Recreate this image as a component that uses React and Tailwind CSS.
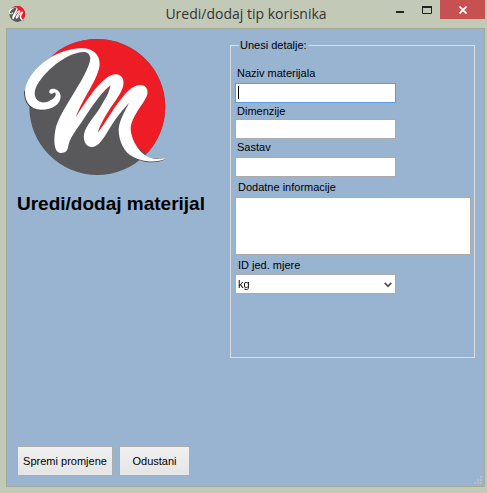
import React from "react";

function Logo({ className }) {
  return (
    <svg viewBox="40 24 432 414" className={className} aria-hidden="true">
      <circle cx="263" cy="231" r="204" fill="#59595b" />
      <path
        fill="#ee1c25"
        d="M118 88C155 45 210 27 263 27A204 204 0 0 1 411 371L380 350L350 295L395 185L264 308L325 150L198 263L258 90L220 58Z"
      />
      <path
        fill="#414143"
        d="M43 180C42 220 60 243 98 242L90 225L60 215ZM370 380C395 399 440 402 468 387L430 385Z"
      />
      <path
        fill="#fff"
        d="M119 183C122 172 150 174 153 198C153 225 125 240 92 239C63 238 45 215 46 185C49 128 130 56 215 55C248 54 270 72 270 102C268 145 218 205 198 263C230 212 280 133 318 133C336 133 344 148 341 165C336 198 285 245 264 308C292 278 345 165 390 165C408 163 416 178 413 192C409 215 366 255 363 295C363 330 395 385 435 386C448 387 460 384 468 386C440 400 395 395 370 380C342 368 327 330 327 300C327 272 348 240 358 218C325 255 312 275 295 303C282 324 267 350 248 351C230 352 220 335 223 313C230 282 254 263 272 232C286 207 300 188 302 166C268 195 240 240 220 270C205 293 184 318 177 343C174 358 173 369 153 369C132 367 132 330 137 300C143 270 165 235 194 187C212 158 241 110 242 85C240 65 225 63 205 68C150 80 76 150 75 190C76 218 103 224 122 211C136 204 141 195 137 188C133 186 130 193 123 191C119 189 118 186 119 183Z"
      />
    </svg>
  );
}

const field = "block border border-[#ababab] bg-white px-[2px] text-black outline-none";
const button =
  "h-[30px] border border-[#acacac] bg-linear-to-b from-[#f0f0f0] to-[#e5e5e5] text-center";

export default function App() {
  return (
    <div className="flex min-h-screen flex-col bg-[#c2cab7] pr-[2px] pb-[6px] pl-[6px] font-['Liberation_Sans',sans-serif] text-[11px] leading-4 text-black">
      <header className="flex h-7 items-center">
        <Logo className="ml-[2px] h-4 w-[18px]" />
        <h1 className="flex-1 pl-20 text-center font-['Open_Sans',sans-serif] text-[14px] leading-5 text-[#333]">
          Uredi/dodaj tip korisnika
        </h1>
        <div className="flex h-7 items-start">
          <button type="button" aria-label="Minimiziraj" className="flex h-[19px] w-[27px] items-center justify-center">
            <svg width="8" height="10"><path d="M0 6h8v2H0z" fill="#222" /></svg>
          </button>
          <button type="button" aria-label="Maksimiziraj" className="flex h-[19px] w-[27px] items-center justify-center">
            <svg width="10" height="8"><path d="M.5 1h9v6.500h-9z" fill="none" stroke="#222" /><path d="M0 0h10v2H0z" fill="#222" /></svg>
          </button>
          <button type="button" aria-label="Zatvori" className="flex h-[19px] w-[45px] items-center justify-center bg-[#c75050]">
            <svg width="8" height="8"><path d="M.5.5l7 7M7.500.5l-7 7" stroke="#fff" strokeWidth="1.800" /></svg>
          </button>
        </div>
      </header>

      <form className="flex flex-1 flex-col border border-[#a3aa99] bg-[#99b4d1]">
        <div className="flex items-start pt-2 pr-[9px]">
          <div className="w-[223px] shrink-0">
            <Logo className="mt-px ml-4 h-[138px] w-[144px]" />
            <h2 className="mt-4 ml-[10px] text-[19px] leading-6 font-bold whitespace-nowrap">
              Uredi/dodaj materijal
            </h2>
          </div>
          <fieldset className="h-[321px] min-w-0 flex-1 border border-[#dcdcdc] pl-1">
            <legend className="ml-1 px-px leading-4">Unesi detalje:</legend>
            <label htmlFor="naziv" className="mt-3 block h-[18px] pl-[2px]">Naziv materijala</label>
            <div className="relative w-[161px]">
              <input id="naziv" autoFocus className={`${field} h-5 w-full caret-transparent focus:border-[#569de5]`} />
              <span className="pointer-events-none absolute top-[3px] left-[3px] h-[13px] w-px bg-black" />
            </div>
            <label htmlFor="dimenzije" className="block h-4 pl-[2px]">Dimenzije</label>
            <input id="dimenzije" className={`${field} h-5 w-[161px]`} />
            <label htmlFor="sastav" className="block h-[18px] pl-[2px]">Sastav</label>
            <input id="sastav" className={`${field} h-5 w-[161px]`} />
            <label htmlFor="dodatne" className="block h-5 pt-[2px] pl-[3px]">Dodatne informacije</label>
            <textarea id="dodatne" className={`${field} h-[58px] w-[236px] resize-none`} />
            <label htmlFor="mjera" className="block h-[19px] pt-[2px] pl-[3px]">ID jed. mjere</label>
            <div className="relative w-[161px]">
              <select id="mjera" className={`${field} h-5 w-full appearance-none`}>
                <option>kg</option>
              </select>
              <svg width="8" height="6" className="pointer-events-none absolute top-2 right-1">
                <path d="M.7.800L4 4.300L7.300.800" fill="none" stroke="#505050" strokeWidth="1.800" />
              </svg>
            </div>
          </fieldset>
        </div>
        <div className="mt-auto flex items-end gap-[6px] pb-[10px] pl-[10px]">
          <button type="button" className={`${button} w-24`}>Spremi promjene</button>
          <button type="button" className={`${button} w-[71px]`}>Odustani</button>
          <svg width="8" height="8" className="mr-[2px] -mb-2 ml-auto" aria-hidden="true">
            <path d="M6 0h2v2H6zM3 3h2v2H3zM6 3h2v2H6zM0 6h2v2H0zM3 6h2v2H3zM6 6h2v2H6z" fill="#bcbcbc" />
          </svg>
        </div>
      </form>
    </div>
  );
}
